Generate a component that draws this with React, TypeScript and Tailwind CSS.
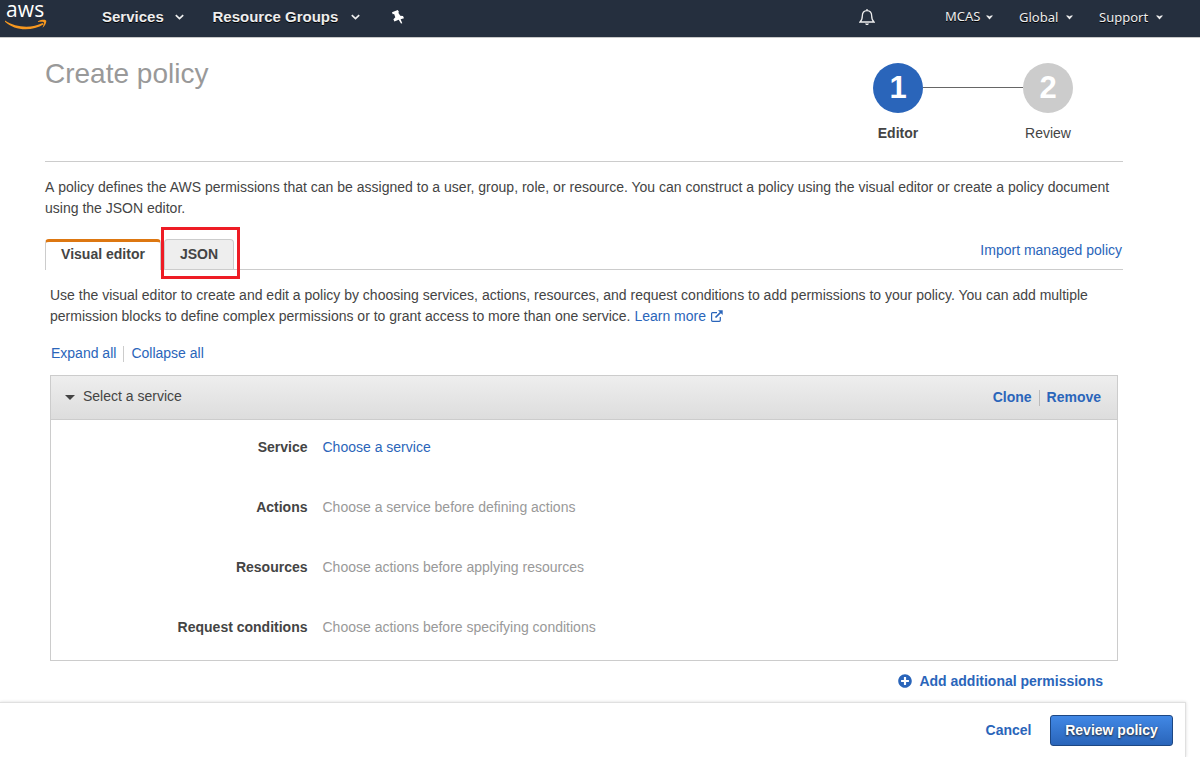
import type { ReactNode } from "react";
import { FaPlusCircle } from "react-icons/fa";

function Caret({ wide = false }: { wide?: boolean }) {
  return wide ? (
    <svg className="h-[6px] w-[9px]" viewBox="0 0 9 6">
      <path d="M.8 1.200 4.500 4.700 8.200 1.200" fill="none" stroke="#eee" strokeWidth="1.700" />
    </svg>
  ) : (
    <svg className="h-[5px] w-[7px]" viewBox="0 0 7 5">
      <path d="M0 .5h2l1.500 1 1.500-1h2L3.500 4.500z" fill="#eee" />
    </svg>
  );
}

function AwsLogo() {
  return (
    <div className="relative h-[37px] w-[48px]">
      <span className="absolute top-[-2px] left-[6px] font-['Open_Sans',sans-serif] text-[21px] leading-[22px] font-medium tracking-[0.1px] text-white">
        aws
      </span>
      <svg className="absolute top-[19px] left-[4px] h-[12px] w-[44px]" viewBox="0 0 44 12">
        <path d="M1 1.500C12 9 28 9.500 38.500 4L39.800 5.300C28 12.500 11 12.200 1 2.800z" fill="#f7981f" />
        <path d="M34 2.200C38 .3 42.800 .2 42.300 2.600 42 5 40.500 7.500 38.500 8.700 39.600 5.800 40.300 3.900 39.800 3.200 38.700 2.700 36.500 2.800 34 3z" fill="#f7981f" />
      </svg>
    </div>
  );
}

function Pin() {
  return (
    <svg className="ml-[31px] h-[14px] w-[14px]" viewBox="0 0 14 14" fill="#fff">
      <path d="M1 2.300 6.800 0 8 1.900 7.300 2.800 9.300 5.800 12 6 13 8.200 9.600 9.200 11.300 13.200 10 13.500 7.700 9.800 3.400 11.400 2.400 9.300 4.300 7.200 3.100 4.100 1.700 4.200z" />
    </svg>
  );
}

function Header() {
  return (
    <header className="flex h-[38px] shrink-0 border-b border-[#c8c8c8] bg-[#252f3e] text-[#eee]">
      <AwsLogo />
      <nav className="ml-[54px] flex h-[34px] items-center text-[15px] font-bold [text-shadow:0_1px_0_#000]">
        <span className="-mt-[2px] w-[73px] whitespace-nowrap">Services</span>
        <Caret wide />
        <span className="-mt-[2px] ml-[28.500px] w-[138.500px] whitespace-nowrap">Resource Groups</span>
        <Caret wide />
        <Pin />
      </nav>
      <div className="ml-auto flex h-[34px] w-[341px] items-center font-['Noto_Sans',sans-serif] text-[13px] [text-shadow:0_1px_0_#000]">
        <svg className="h-[18px] w-[16px]" viewBox="0 0 16 18" fill="none" stroke="#eee" strokeWidth="1.3">
          <path d="M8 1v1.500M1 14h14c-2-1.600-2.300-3.300-2.300-6C12.700 4.500 11 2.600 8 2.600S3.300 4.500 3.300 8c0 2.700-.3 4.400-2.300 6z" />
          <path d="M6 15.500h4L9 17H7z" fill="#eee" stroke="none" />
        </svg>
        <span className="-mt-[2px] ml-[70px] w-[41px]">MCAS</span>
        <Caret />
        <span className="ml-[26px] w-[47px]">Global</span>
        <Caret />
        <span className="ml-[26px] w-[57px]">Support</span>
        <Caret />
      </div>
    </header>
  );
}

function Step({ number, label, active = false }: { number: number; label: string; active?: boolean }) {
  return (
    <div className="flex w-[50px] flex-col items-center">
      <div className={`flex size-[50px] items-center justify-center rounded-full pb-[2px] text-[31px] font-bold text-white ${active ? "bg-[#2a65ba]" : "bg-[#ccc]"}`}>
        {number}
      </div>
      <span className={`mt-[10px] leading-[21px] ${active ? "font-bold" : ""}`}>{label}</span>
    </div>
  );
}

function Link({ children, className = "" }: { children: ReactNode; className?: string }) {
  return <a className={`cursor-pointer text-[#2a65ba] ${className}`}>{children}</a>;
}

const fields = [
  { label: "Service", value: "Choose a service", link: true },
  { label: "Actions", value: "Choose a service before defining actions" },
  { label: "Resources", value: "Choose actions before applying resources" },
  { label: "Request conditions", value: "Choose actions before specifying conditions" },
];

export default function App() {
  return (
    <div className="flex h-[759px] w-[1200px] flex-col overflow-hidden bg-white font-['Liberation_Sans',Arial,sans-serif] text-[14px] leading-[21px] text-[#444]">
      <Header />
      <main className="ml-[45px] flex h-[664px] w-[1078px] shrink-0 flex-col">
        <div className="flex h-[124px] shrink-0 justify-between border-b border-[#ccc] pt-[25px]">
          <h1 className="-mt-[7px] text-[28px] leading-[36px] text-[#999]">Create policy</h1>
          <div className="mr-[50px] flex">
            <Step number={1} label="Editor" active />
            <div className="mt-[24px] h-px w-[100px] bg-[#666]" />
            <Step number={2} label="Review" />
          </div>
        </div>
        <p className="mt-[15px] whitespace-nowrap [word-spacing:0.03px]">
          <span className="[font-kerning:none]">A </span>
          policy defines the AWS permissions that can be assigned to a user, group, role, or resource. You can construct a policy using the visual editor or create a policy document
          <br />
          using the JSON editor.
        </p>
        <div className="mt-[20px] flex h-[31px] shrink-0 items-stretch border-b border-[#ccc]">
          <div className="-mb-px h-[31px] w-[116px] rounded-t-[4px] border-x border-t-[3px] border-x-[#ccc] border-t-[#dd7711] bg-white pt-[2px] text-center font-bold">
            Visual editor
          </div>
          <div className="relative ml-[3px] w-[70px] rounded-t-[4px] border border-b-0 border-[#ccc] bg-[#eee] pt-[4px] text-center font-bold">
            JSON
            <div className="absolute -top-[13px] -left-[4px] h-[52px] w-[79px] border-[3px] border-[#ee1c25]" />
          </div>
          <Link className="ml-auto pt-px pr-[1px]">Import managed policy</Link>
        </div>
        <div className="mx-[5px] flex flex-col">
          <p className="mt-[15px] whitespace-nowrap">
            Use the visual editor to create and edit a policy by choosing services, actions, resources, and request conditions to add permissions to your policy. You can add multiple
            <br />
            permission blocks to define complex permissions or to grant access to more than one service.{" "}
            <Link>
              Learn more{" "}
              <svg className="ml-px inline-block size-[12px] align-[-1px]" viewBox="0 0 12 12" fill="none" stroke="#2a65ba" strokeWidth="1.2">
                <path d="M6 2.600H1.600Q.6 2.600 .6 3.600v6.700q0 1 1 1h6.700q1 0 1-1V7" />
                <path d="M4.500 7.500 10 2" strokeWidth="1.7" />
                <path d="M7 .3h4.700V5z" fill="#2a65ba" stroke="none" />
              </svg>
            </Link>
          </p>
          <div className="mt-[16px] ml-px flex h-[21px] items-center">
            <Link>Expand all</Link>
            <span className="mx-[7px] h-[16px] w-px bg-[#ccc]" />
            <Link>Collapse all</Link>
          </div>
          <section className="mt-[11px] h-[286px] border border-[#ccc]">
            <div className="flex h-[44px] items-center border-b border-[#ccc] bg-linear-to-b from-[#eee] to-[#ddd] pr-[16px] pl-[14px]">
              <svg className="mr-[8px] h-[5px] w-[10px]" viewBox="0 0 10 5">
                <path d="M0 0h10L5 5z" fill="#444" />
              </svg>
              <span className="-mt-[2px]">Select a service</span>
              <div className="ml-auto flex items-center font-bold">
                <Link>Clone</Link>
                <span className="mx-[7px] h-[16px] w-px bg-[#bbb]" />
                <Link>Remove</Link>
              </div>
            </div>
            <dl>
              {fields.map(({ label, value, link }) => (
                <div key={label} className="flex h-[60px] pt-[17px]">
                  <dt className="w-[256.500px] text-right font-bold">{label}</dt>
                  <dd className="ml-[15px] text-[#999]">{link ? <Link>{value}</Link> : value}</dd>
                </div>
              ))}
            </dl>
          </section>
          <Link className="mt-[10px] mr-[15px] flex items-center self-end font-bold">
            <FaPlusCircle className="mr-[7px] -mt-[2px] size-[14px]" />
            Add additional permissions
          </Link>
        </div>
      </main>
      <footer className="flex h-[55px] w-[1186px] shrink-0 justify-end border-t border-r border-[#e0e0e0] bg-white pr-[12px] font-bold shadow-[0_0_3px_rgba(0,0,0,0.15)] [clip-path:inset(-4px_-4px_0_0)]">
        <Link className="mt-[17px]">Cancel</Link>
        <button className="mt-[12px] ml-[18.500px] h-[31px] w-[123px] rounded-[3px] border border-[#1d4783] bg-linear-to-b from-[#4188e5] to-[#2a65ba] text-white [text-shadow:0_1px_2px_#222]">
          Review policy
        </button>
      </footer>
    </div>
  );
}
